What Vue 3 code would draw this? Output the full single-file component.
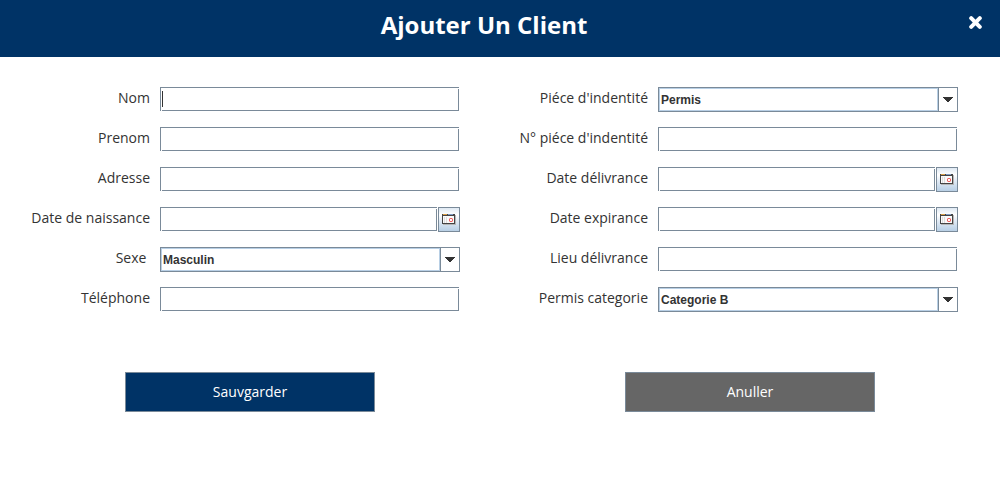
<script setup>
import { reactive } from 'vue'

const form = reactive({
  nom: '', prenom: '', adresse: '', naissance: '', sexe: 'Masculin', telephone: '',
  piece: 'Permis', numero: '', delivrance: '', expirance: '', lieu: '', categorie: 'Categorie B'
})

const columns = [
  [
    { id: 'nom', label: 'Nom', type: 'text', active: true },
    { id: 'prenom', label: 'Prenom', type: 'text' },
    { id: 'adresse', label: 'Adresse', type: 'text' },
    { id: 'naissance', label: 'Date de naissance', type: 'date' },
    { id: 'sexe', label: 'Sexe\u00a0', type: 'select', options: ['Masculin', 'Feminin'] },
    { id: 'telephone', label: 'Téléphone', type: 'text' }
  ],
  [
    { id: 'piece', label: "Piéce d'indentité", type: 'select', options: ['Permis', 'Passeport'] },
    { id: 'numero', label: "N° piéce d'indentité", type: 'text' },
    { id: 'delivrance', label: 'Date délivrance', type: 'date' },
    { id: 'expirance', label: 'Date expirance', type: 'date' },
    { id: 'lieu', label: 'Lieu délivrance', type: 'text' },
    { id: 'categorie', label: 'Permis categorie', type: 'select', options: ['Categorie A', 'Categorie B'] }
  ]
]
</script>

<template>
  <div class="dialog">
    <header class="bar">
      <h1 class="title">Ajouter Un Client</h1>
      <button class="close" type="button" aria-label="Fermer">
        <svg width="13" height="13" viewBox="0 0 13 13" aria-hidden="true">
          <path d="M2.2 2.2 10.8 10.8M10.8 2.2 2.2 10.8" fill="none" stroke="#fff" stroke-width="4" stroke-linecap="round" />
        </svg>
      </button>
    </header>

    <form @submit.prevent>
      <div class="fields">
        <div v-for="(column, i) in columns" :key="i" class="column">
          <div v-for="field in column" :key="field.id" class="row">
            <label class="label" :for="field.id">{{ field.label }}</label>

            <div v-if="field.type === 'select'" class="combo">
              <select :id="field.id" v-model="form[field.id]" class="select">
                <option v-for="option in field.options" :key="option">{{ option }}</option>
              </select>
              <span class="arrow">
                <svg width="10" height="5" viewBox="0 0 10 5" shape-rendering="crispEdges" aria-hidden="true">
                  <path d="M0 0h10v1H9v1H8v1H7v1H6v1H4V4H3V3H2V2H1V1H0z" fill="#333" />
                </svg>
              </span>
            </div>

            <div v-else-if="field.type === 'date'" class="date">
              <input :id="field.id" v-model="form[field.id]" class="input" type="text" />
              <button class="picker" type="button" :aria-label="'Choisir : ' + field.label">
                <svg width="14" height="11" viewBox="0 0 14 11" shape-rendering="crispEdges" aria-hidden="true">
                  <path d="M1 1h13v10H1z" fill="#b5b5b5" />
                  <path d="M0 0h13v10H0z" fill="#444" />
                  <path d="M1 2h11v7H1z" fill="#fafafa" />
                  <path d="M1 0h4v1H1z" fill="#d9a04a" />
                  <path d="M6 0h5v1H6z" fill="#7f9cc6" />
                  <path d="M2 3h1v6H2zM4 3h1v6H4z" fill="#dedede" />
                  <path d="M8 4h2v1H8zM7 5h1v2H7zM10 5h1v2h-1zM8 7h2v1H8z" fill="#f06060" />
                  <path d="M7 4h1v1H7zM10 4h1v1h-1zM7 7h1v1H7zM10 7h1v1h-1z" fill="#f7b5b5" />
                </svg>
              </button>
            </div>

            <input v-else :id="field.id" v-model="form[field.id]" class="input" :class="{ active: field.active }" type="text" />
          </div>
        </div>
      </div>

      <div class="actions">
        <button class="action save" type="submit">Sauvgarder</button>
        <button class="action cancel" type="button">Anuller</button>
      </div>
    </form>
  </div>
</template>

<style>
body {
  margin: 0;
  background: #fff;
}
</style>

<style scoped>
.dialog {
  --line: #7a8a99;
  --tint: #b8cfe5;
  font-family: "Open Sans", "Noto Sans", sans-serif;
  font-size: 14px;
  color: #333;
}

.dialog * {
  box-sizing: border-box;
}

.bar {
  display: grid;
  grid-template-columns: 64px 1fr 64px;
  align-items: center;
  height: 57px;
  padding-bottom: 12px;
  background: #003366;
}

.title {
  grid-column: 2;
  margin: 0;
  padding: 4px 32px 0 0;
  font-size: 24px;
  line-height: 32px;
  font-weight: 700;
  text-align: center;
  color: #fff;
}

.close {
  display: flex;
  justify-self: end;
  margin-right: 18px;
  padding: 0;
  border: 0;
  background: none;
}

.fields {
  display: grid;
  grid-template-columns: 1fr 1fr;
  gap: 38px;
  padding: 30px 42px 60px 0;
}

.column {
  display: grid;
  gap: 15px;
}

.row {
  display: grid;
  grid-template-columns: 1fr 2fr;
  gap: 10px;
  height: 25px;
}

.label {
  line-height: 22px;
  text-align: right;
  white-space: nowrap;
}

.input {
  width: 100%;
  min-width: 0;
  height: 24px;
  margin: 0;
  padding: 0 3px;
  border: 0;
  outline: 0;
  font: inherit;
  color: inherit;
  background-color: #fff;
  background-image:
    linear-gradient(var(--line), var(--line)),
    linear-gradient(var(--line), var(--line)),
    linear-gradient(var(--line), var(--line)),
    linear-gradient(var(--line), var(--line)),
    linear-gradient(#333, #333);
  background-repeat: no-repeat;
  background-size: 100% 1px, 1px 100%, calc(100% - 2px) 1px, 1px calc(100% - 2px), 1px 0;
  background-position: 0 0, 0 0, right bottom, right bottom, 2px 4px;
}

.row > .input {
  width: calc(100% - 1px);
}

.active {
  background-size: 100% 1px, 1px 100%, calc(100% - 2px) 1px, 1px calc(100% - 2px), 1px 16px;
}

.date {
  display: grid;
  grid-template-columns: 1fr 22px;
  gap: 1px;
}

.picker {
  display: flex;
  align-items: center;
  justify-content: center;
  height: 25px;
  padding: 0;
  border: 1px solid var(--line);
  background: linear-gradient(#dfe9f3, #fff 30%, #e8eff7 50%, #b8cfe5);
}

.combo {
  position: relative;
  height: 25px;
  border: 1px solid var(--line);
}

.select {
  appearance: none;
  display: block;
  width: 100%;
  height: 100%;
  margin: 0;
  padding: 0 20px 0 2px;
  border: 0;
  border-radius: 0;
  outline: 0;
  background: #fff;
  font: 700 12px "Liberation Sans", Arial, sans-serif;
  color: #333;
}

.combo::before {
  content: "";
  position: absolute;
  inset: 0 19px 0 0;
  border: 1px solid var(--tint);
  pointer-events: none;
}

.arrow {
  position: absolute;
  inset: 0 0 0 auto;
  display: flex;
  align-items: center;
  justify-content: center;
  width: 19px;
  border-left: 1px solid var(--line);
  pointer-events: none;
}

.actions {
  display: grid;
  grid-template-columns: 1fr 1fr;
  justify-items: center;
}

.action {
  width: 50%;
  height: 40px;
  padding: 0 0 2px;
  border: 1px solid var(--line);
  font: inherit;
  color: #fff;
}

.save {
  background: #003366;
}

.cancel {
  background: #666;
}
</style>
